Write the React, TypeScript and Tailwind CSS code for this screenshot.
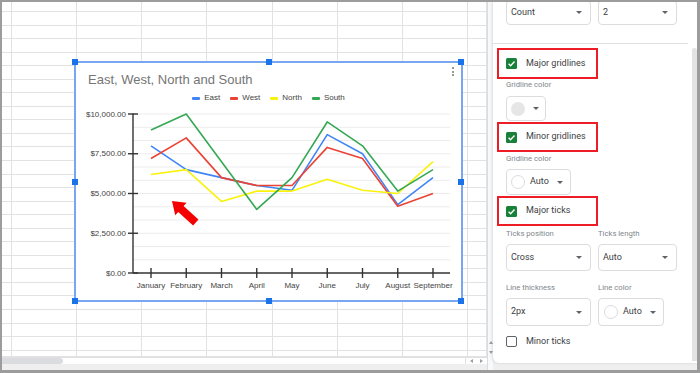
import React from "react";

const COLS = [
  "w-[10px]",
  "w-[65px]",
  "w-[65px]",
  "w-[65px]",
  "w-[66px]",
  "w-[65px]",
  "w-[65px]",
  "w-[65px]",
  "w-[19px]",
];

const ROWS: string[] = [
  "h-[10px]",
  ...Array.from({ length: 25 }, () => "h-[13.56px]"),
  "flex-1",
];

const MONTHS = [
  "January",
  "February",
  "March",
  "April",
  "May",
  "June",
  "July",
  "August",
  "September",
];

const SERIES = [
  { name: "East", color: "#4285f4", data: [8000, 6500, 6000, 5500, 5200, 8700, 7500, 4300, 6000] },
  { name: "West", color: "#ea4335", data: [7200, 8500, 6000, 5500, 5500, 7900, 7200, 4200, 5000] },
  { name: "North", color: "#f9f20c", data: [6200, 6500, 4500, 5150, 5150, 5900, 5200, 5000, 7000] },
  { name: "South", color: "#34a853", data: [9000, 10000, 7000, 4000, 6000, 9500, 8000, 5150, 6500] },
];

const X0 = 151;
const DX = 35.25;
const yOf = (v: number) => 273 - v * 0.0159;

function Caret() {
  return (
    <svg width="6" height="3" viewBox="0 0 6 3" className="shrink-0">
      <path d="M0 0h6L3 3z" fill="#5f6368" />
    </svg>
  );
}

function Checked() {
  return (
    <svg width="11" height="11" viewBox="0 0 11 11" className="shrink-0">
      <rect x="0" y="0" width="11" height="11" rx="1.5" fill="#188038" />
      <path d="M2.6 5.8 L4.6 7.7 L8.5 3.6" stroke="#fff" strokeWidth="1.4" fill="none" />
    </svg>
  );
}

function Select({ w, value }: { w: string; value: string }) {
  return (
    <div
      className={`${w} h-full border border-[#dadce0] rounded-[4px] flex items-center justify-between pl-[4px] pr-[8px] text-[9px] text-[#3c4043]`}
    >
      <span>{value}</span>
      <Caret />
    </div>
  );
}

function RedCheck({ h, label }: { h: string; label: string }) {
  return (
    <div
      className={`${h} ml-[-9px] w-[101px] border-2 border-[#ee1c25] flex items-center pl-[7px] gap-[9px] text-[9px] text-[#3c4043]`}
    >
      <Checked />
      <span>{label}</span>
    </div>
  );
}

function Chart() {
  const ticksY = [0, 2500, 5000, 7500, 10000];
  const labelsY = ["$0.00", "$2,500.00", "$5,000.00", "$7,500.00", "$10,000.00"];
  const grid: number[] = [];
  for (let i = 1; i <= 12; i++) grid.push(yOf(i * 833.33));
  return (
    <div className="absolute left-[72px] top-[59px] w-[389px] h-[241px] border-2 border-[#79a6f0] bg-white flex flex-col font-['Liberation_Sans',Arial,sans-serif]">
      <div className="mt-[9px] h-[15px] leading-[15px] pl-[12px] text-[13px] text-[#757575] whitespace-nowrap">
        East, West, North and South
      </div>
      <div className="mt-[6px] h-[10px] flex items-center justify-center gap-[10px] text-[8px] text-[#444444]">
        {SERIES.map((s) => (
          <div key={s.name} className="flex items-center gap-[4px]">
            <div className="w-[8px] h-[3px] rounded-[1px]" style={{ background: s.color }} />
            <span className="leading-[10px]">{s.name}</span>
          </div>
        ))}
      </div>
      <svg width="385" height="197" viewBox="76 103 385 197" className="block">
        {grid.map((y, i) => (
          <line key={i} x1="133" x2="450" y1={y} y2={y} stroke="#ececec" strokeWidth="1" />
        ))}
        {ticksY.map((v, i) => (
          <g key={v}>
            <line x1="128" x2="138" y1={yOf(v)} y2={yOf(v)} stroke="#333" strokeWidth="1.4" />
            <text
              x="126"
              y={yOf(v)}
              textAnchor="end"
              dominantBaseline="central"
              fontSize="8"
              fill="#444"
              fontFamily="Liberation Sans, Arial, sans-serif"
            >
              {labelsY[i]}
            </text>
          </g>
        ))}
        <line x1="133" x2="133" y1="113.5" y2="273" stroke="#333" strokeWidth="1.4" />
        <line x1="133" x2="450" y1="273" y2="273" stroke="#333" strokeWidth="1.4" />
        {MONTHS.map((m, i) => (
          <g key={m}>
            <line x1={X0 + i * DX} x2={X0 + i * DX} y1="268" y2="278" stroke="#333" strokeWidth="1.4" />
            <text
              x={X0 + i * DX}
              y="285.5"
              textAnchor="middle"
              dominantBaseline="central"
              fontSize="8"
              fill="#444"
              fontFamily="Liberation Sans, Arial, sans-serif"
            >
              {m}
            </text>
          </g>
        ))}
        {SERIES.map((s) => (
          <polyline
            key={s.name}
            points={s.data.map((v, i) => `${X0 + i * DX},${yOf(v)}`).join(" ")}
            fill="none"
            stroke={s.color}
            strokeWidth="1.6"
            strokeLinejoin="round"
          />
        ))}
        <polygon
          points="0,0 12,-8.5 12,-4 32,-4 32,4 12,4 12,8.5"
          fill="#f40000"
          transform="translate(172,201) rotate(42)"
        />
      </svg>
      <div className="absolute right-[7px] top-[4px] flex flex-col gap-[1.5px]">
        <div className="w-[2px] h-[2px] rounded-full bg-[#757575]" />
        <div className="w-[2px] h-[2px] rounded-full bg-[#757575]" />
        <div className="w-[2px] h-[2px] rounded-full bg-[#757575]" />
      </div>
      <div className="absolute left-[-4px] top-[-4px] w-[6px] h-[6px] bg-[#1a73e8]" />
      <div className="absolute left-[189.5px] top-[-4px] w-[6px] h-[6px] bg-[#1a73e8]" />
      <div className="absolute left-[382px] top-[-4px] w-[6px] h-[6px] bg-[#1a73e8]" />
      <div className="absolute left-[-4px] top-[115.5px] w-[6px] h-[6px] bg-[#1a73e8]" />
      <div className="absolute left-[382px] top-[115.5px] w-[6px] h-[6px] bg-[#1a73e8]" />
      <div className="absolute left-[-4px] top-[235px] w-[6px] h-[6px] bg-[#1a73e8]" />
      <div className="absolute left-[189.5px] top-[235px] w-[6px] h-[6px] bg-[#1a73e8]" />
      <div className="absolute left-[382px] top-[235px] w-[6px] h-[6px] bg-[#1a73e8]" />
    </div>
  );
}

export default function App() {
  return (
    <div className="w-[700px] h-[373px] border-t-2 border-l-2 border-r-[3px] border-b-[3px] border-[#9c9c9c] bg-[#efefef] flex overflow-hidden">
      <div className="w-[485px] h-full flex flex-col bg-white">
        <div className="relative h-[355px] overflow-hidden flex flex-col">
          {ROWS.map((rh, r) => (
            <div key={r} className={`${rh} flex shrink-0`}>
              {COLS.map((cw, c) => (
                <div key={c} className={`${cw} h-full border-r border-b border-[#e2e2e2] shrink-0`} />
              ))}
            </div>
          ))}
          <Chart />
        </div>
        <div className="h-[7px] border-t border-[#e0e0e0] flex bg-white">
          <div className="w-[61px] bg-[#dadce0] rounded-r-full" />
          <div className="flex-1" />
          <div className="w-[22px] border-l border-[#e0e0e0] flex items-center justify-around">
            <svg width="3" height="4" viewBox="0 0 3 4">
              <path d="M3 0v4L0 2z" fill="#9aa0a6" />
            </svg>
            <svg width="3" height="4" viewBox="0 0 3 4">
              <path d="M0 0v4l3-2z" fill="#9aa0a6" />
            </svg>
          </div>
        </div>
        <div className="flex-1 bg-[#efefef]" />
      </div>
      <div className="w-[6px] h-full bg-[#f8f9fa] border-l border-[#dadce0] flex flex-col items-center justify-end pb-[16px] gap-[7px]">
        <svg width="4" height="3" viewBox="0 0 4 3">
          <path d="M0 3h4L2 0z" fill="#9aa0a6" />
        </svg>
        <svg width="4" height="3" viewBox="0 0 4 3">
          <path d="M0 0h4L2 3z" fill="#9aa0a6" />
        </svg>
      </div>
      <div className="w-[204px] h-full flex flex-col">
        <div className="h-[361px] bg-white rounded-bl-[6px] overflow-hidden shadow-[-1px_0_3px_rgba(0,0,0,0.12)] flex font-['Roboto',sans-serif]">
          <div className="w-[197px] flex flex-col pl-[13px] mt-[-2px]">
            <div className="h-[25px] flex gap-[7px] shrink-0">
              <Select w="w-[85px]" value="Count" />
              <Select w="w-[79px]" value="2" />
            </div>
            <div className="mt-[18px] ml-[-13px] w-[195px] h-px bg-[#e0e0e0] shrink-0" />
            <div className="mt-[4px] shrink-0">
              <RedCheck h="h-[31px]" label="Major gridlines" />
            </div>
            <div className="mt-[1px] h-[10px] leading-[10px] text-[7.7px] text-[#80868b] shrink-0">Gridline color</div>
            <div className="mt-[6px] h-[25px] w-[40px] border border-[#dadce0] rounded-[4px] flex items-center pl-[4px] gap-[8px] shrink-0">
              <div className="w-[14px] h-[14px] rounded-full bg-[#e6e6e6]" />
              <Caret />
            </div>
            <div className="mt-[1px] shrink-0">
              <RedCheck h="h-[30px]" label="Minor gridlines" />
            </div>
            <div className="mt-[2px] h-[10px] leading-[10px] text-[7.7px] text-[#80868b] shrink-0">Gridline color</div>
            <div className="mt-[5px] h-[26px] w-[65px] border border-[#dadce0] rounded-[4px] flex items-center pl-[4px] shrink-0 text-[9px] text-[#3c4043]">
              <div className="w-[14px] h-[14px] rounded-full border border-[#dadce0] bg-white" />
              <span className="ml-[5px]">Auto</span>
              <span className="ml-[8px]">
                <Caret />
              </span>
            </div>
            <div className="mt-[1px] shrink-0">
              <RedCheck h="h-[30px]" label="Major ticks" />
            </div>
            <div className="mt-[3px] h-[10px] leading-[10px] text-[7.7px] text-[#80868b] flex shrink-0">
              <div className="w-[92px]">Ticks position</div>
              <div>Ticks length</div>
            </div>
            <div className="mt-[5px] h-[27px] flex gap-[7px] shrink-0">
              <Select w="w-[85px]" value="Cross" />
              <Select w="w-[79px]" value="Auto" />
            </div>
            <div className="mt-[12px] h-[10px] leading-[10px] text-[7.7px] text-[#80868b] flex shrink-0">
              <div className="w-[92px]">Line thickness</div>
              <div>Line color</div>
            </div>
            <div className="mt-[5px] h-[28px] flex gap-[7px] shrink-0">
              <Select w="w-[85px]" value="2px" />
              <div className="h-full w-[66px] border border-[#dadce0] rounded-[4px] flex items-center pl-[5px] text-[9px] text-[#3c4043]">
                <div className="w-[14px] h-[14px] rounded-full border border-[#dadce0] bg-white" />
                <span className="ml-[5px]">Auto</span>
                <span className="ml-[8px]">
                  <Caret />
                </span>
              </div>
            </div>
            <div className="mt-[10px] h-[11px] flex items-center gap-[9px] shrink-0 text-[9px] text-[#3c4043]">
              <div className="w-[11px] h-[11px] border-[1.5px] border-[#5f6368] rounded-[2px]" />
              <span>Minor ticks</span>
            </div>
          </div>
          <div className="w-[7px] flex flex-col">
            <div className="ml-[2px] mt-[46px] w-[5px] h-[313px] bg-[#e3e3e3] rounded-t-[3px]" />
          </div>
        </div>
        <div className="flex-1" />
      </div>
    </div>
  );
}
